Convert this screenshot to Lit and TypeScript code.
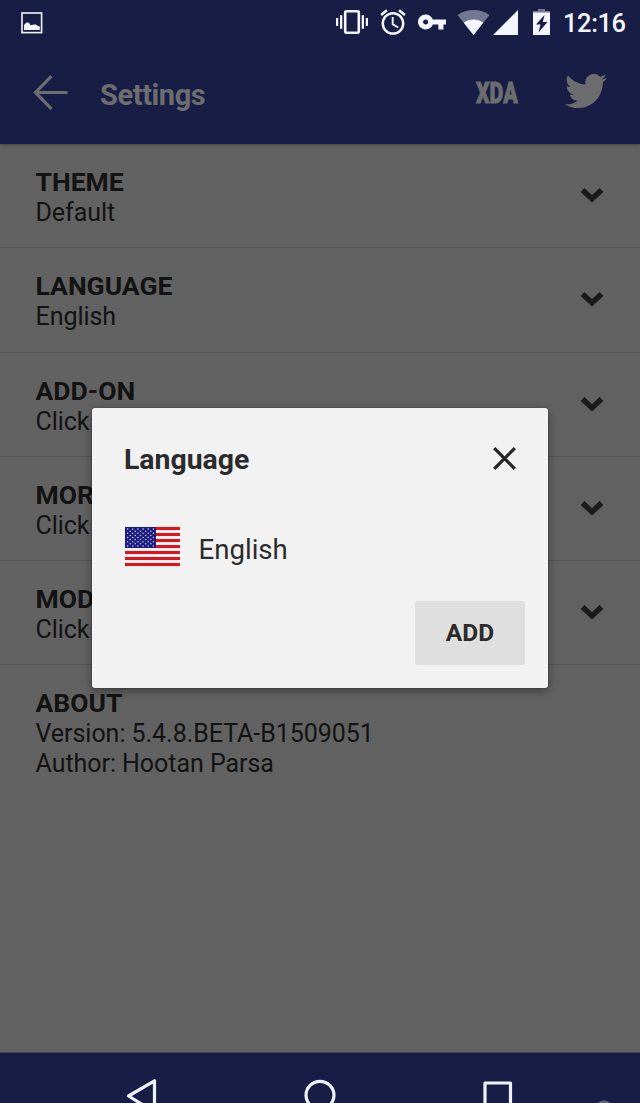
import { LitElement, html, css, svg } from "lit";
import { customElement, property } from "lit/decorators.js";

interface Setting {
  title: string;
  lines: string[];
  expandable: boolean;
}

const SETTINGS: Setting[] = [
  { title: "THEME", lines: ["Default"], expandable: true },
  { title: "LANGUAGE", lines: ["English"], expandable: true },
  { title: "ADD-ON", lines: ["Click"], expandable: true },
  { title: "MORE", lines: ["Click"], expandable: true },
  { title: "MODE", lines: ["Click"], expandable: true },
  { title: "ABOUT", lines: ["Version: 5.4.8.BETA-B1509051", "Author: Hootan Parsa"], expandable: false },
];

@customElement("status-bar")
class StatusBar extends LitElement {
  static styles = css`
    :host { display: flex; height: 46px; padding: 0 15px 0 21px; align-items: flex-start; color: #f4f6ff; box-sizing: border-box; }
    svg { display: block; flex: none; fill: currentColor; }
    .picture { margin: 12px auto 0 0; }
    .vibrate { margin: 10px 12px 0 0; }
    .alarm { margin: 9px 12px 0 0; }
    .key { margin: 14px 11px 0 0; }
    .wifi { margin: 10px 3px 0 0; }
    .signal { margin: 10px 15px 0 0; }
    .battery { margin: 9px 0 0 0; }
    .clock { width: 62px; margin-left: 13px; padding-top: 8px; font-size: 25.5px; line-height: 30px; font-weight: 500; letter-spacing: -0.4px; white-space: nowrap; }
  `;
  render() {
    return html`
      <svg class="picture" width="22" height="22" viewBox="0 0 22 22">
        <rect x="1" y="1" width="19.6" height="19.6" fill="none" stroke="currentColor" stroke-width="1.6" />
        <path d="M3 18V13L5.5 10.6L8 10.8L9.5 13.3L13.3 12.4L14.8 12.4L16.5 13.8L18.8 14.6V18Z" />
      </svg>
      <svg class="vibrate" width="32" height="24" viewBox="0 0 32 24">
        <rect x="9.2" y="1.2" width="13.6" height="21.6" rx="1.2" fill="none" stroke="currentColor" stroke-width="2.6" />
        <path d="M0 8h2.2v8H0zM4 5.3h2.3v13.4H4zM25.7 5.3H28v13.4h-2.3zM29.8 8H32v8h-2.2z" />
      </svg>
      <svg class="alarm" width="26" height="26" viewBox="1.8 1.7 20.4 20.4">
        <path d="M22 5.72l-4.6-3.86-1.29 1.53 4.6 3.86L22 5.72zM7.88 3.39L6.6 1.86 2 5.71l1.29 1.53 4.59-3.85zM12.5 8H11v6l4.75 2.85.75-1.23-4-2.37V8zM12 4c-4.97 0-9 4.03-9 9s4.02 9 9 9c4.97 0 9-4.03 9-9s-4.03-9-9-9zm0 16c-3.87 0-7-3.13-7-7s3.13-7 7-7 7 3.13 7 7-3.13 7-7 7z" />
      </svg>
      <svg class="key" width="28" height="16" viewBox="1 5.5 22 13" preserveAspectRatio="none">
        <path d="M12.65 10C11.83 7.67 9.61 6 7 6c-3.31 0-6 2.69-6 6s2.69 6 6 6c2.61 0 4.83-1.67 5.65-4H17v4h4v-4h2v-4H12.65zM7 14c-1.1 0-2-.9-2-2s.9-2 2-2 2 .9 2 2-.9 2-2 2z" />
      </svg>
      <svg class="wifi" width="33" height="25" viewBox="0 0 33 25">
        <path opacity=".42" d="M16.5 25L.5 5.1Q7.5 0 16.5 0T32.5 5.1Z" />
        <path d="M16.5 25L6.8 12.8Q11 9.6 16.5 9.6T26.2 12.8Z" />
      </svg>
      <svg class="signal" width="25" height="25" viewBox="0 0 25 25"><path d="M25 0V25H0Z" /></svg>
      <svg class="battery" width="17" height="26" viewBox="0 0 17 26">
        <path opacity=".42" d="M5 0h7v2h5v2H0V2h5z" />
        <path fill-rule="evenodd" d="M0 3.5H17V26H0ZM11.5 6L3 15.5H7.5L5.5 23.5L14.5 13H9.8Z" />
      </svg>
      <div class="clock">12:16</div>
    `;
  }
}

@customElement("app-header")
class AppHeader extends LitElement {
  static styles = css`
    :host { display: flex; height: 98px; padding: 0 33px; box-sizing: border-box; align-items: flex-start; color: #6d6d70; }
    svg { display: block; flex: none; }
    .back { margin: 29px 32px 0 0; fill: none; stroke: currentColor; stroke-width: 3.2; }
    .title { flex: 1; padding-top: 32px; font-size: 29px; line-height: 34px; font-weight: 700; letter-spacing: -0.4px; }
    .xda { width: 42px; margin: 32px 47px 0 0; font-size: 30px; line-height: 30px; font-weight: 900; }
    .xda span { display: inline-block; transform: scaleX(0.71); transform-origin: 0 0; -webkit-text-stroke: 0.9px currentColor; }
    .bird { margin-top: 24px; fill: currentColor; }
  `;
  render() {
    return html`
      <svg class="back" width="35" height="35" viewBox="0 0 35 35"><path d="M18.5 1.2L2.5 17.5L18.5 33.8M2.5 17.5H34.5" /></svg>
      <div class="title">Settings</div>
      <div class="xda"><span>XDA</span></div>
      <svg class="bird" width="42" height="42" viewBox="0 0 24 24">
        <path d="M23.953 4.57a10 10 0 01-2.825.775 4.958 4.958 0 002.163-2.723c-.951.555-2.005.959-3.127 1.184a4.92 4.92 0 00-8.384 4.482C7.69 8.095 4.067 6.13 1.64 3.162a4.822 4.822 0 00-.666 2.475c0 1.71.87 3.213 2.188 4.096a4.904 4.904 0 01-2.228-.616v.06a4.923 4.923 0 003.946 4.827 4.996 4.996 0 01-2.212.085 4.936 4.936 0 004.604 3.417 9.867 9.867 0 01-6.102 2.105c-.39 0-.779-.023-1.17-.067a13.995 13.995 0 007.557 2.209c9.053 0 13.998-7.496 13.998-13.985 0-.21 0-.42-.015-.63A9.935 9.935 0 0024 4.59z" />
      </svg>
    `;
  }
}

@customElement("setting-row")
class SettingRow extends LitElement {
  @property({ attribute: false }) item!: Setting;
  static styles = css`
    :host { display: flex; height: 104.25px; box-sizing: border-box; padding: 23px 36px 0 35.5px; align-items: flex-start; color: #131313; border-bottom: 1px solid #565656; }
    :host(.last) { border-bottom-color: transparent; height: auto; }
    .text { flex: 1; }
    .title { font-size: 26.5px; line-height: 30px; font-weight: 700; margin-bottom: 1px; }
    .line { font-size: 25px; line-height: 29.5px; letter-spacing: -0.04px; }
    .chevron { display: block; margin-top: 20px; fill: none; stroke: #1b1b1b; stroke-width: 5.6; }
  `;
  render() {
    return html`
      <div class="text">
        <div class="title">${this.item.title}</div>
        ${this.item.lines.map((l) => html`<div class="line">${l}</div>`)}
      </div>
      ${this.item.expandable
        ? html`<svg class="chevron" width="24" height="17" viewBox="0 0 24 17"><path d="M2.5 3L12 11.8L21.5 3" /></svg>`
        : null}
    `;
  }
}

@customElement("language-dialog")
class LanguageDialog extends LitElement {
  static styles = css`
    :host { display: flex; flex-direction: column; box-sizing: border-box; width: 456px; height: 280px; background: #f2f2f2; border-radius: 3px; box-shadow: 0 3px 10px rgba(0, 0, 0, 0.4), 0 0 2px rgba(0, 0, 0, 0.3); color: #2b2b2b; }
    .head { display: flex; justify-content: space-between; padding: 35px 32px 0; }
    .title { font-size: 28.4px; line-height: 34px; font-weight: 700; }
    .close { display: block; margin-top: 4px; fill: none; stroke: #262626; stroke-width: 3.2; }
    .option { display: flex; align-items: center; gap: 18.5px; padding: 0 33px; margin-top: 50px; height: 39px; font-size: 27.6px; line-height: 34px; }
    .name { padding-top: 6px; }
    .flag { display: block; flex: none; }
    .add { align-self: flex-end; margin: 35px 23px 0 0; border: 0; padding: 0; width: 110px; height: 64px; background: #dfdfdf; border-radius: 2px; color: #2b2b2b; font: 700 24.5px/64px Roboto, sans-serif; text-align: center; }
  `;
  render() {
    const stripes = [0, 1, 2, 3, 4, 5, 6];
    const rows = [0, 1, 2, 3, 4, 5, 6, 7, 8];
    return html`
      <div class="head">
        <div class="title">Language</div>
        <svg class="close" width="23" height="23" viewBox="0 0 23 23"><path d="M1.2 1.2L21.8 21.8M21.8 1.2L1.2 21.8" /></svg>
      </div>
      <div class="option">
        <svg class="flag" width="55" height="39" viewBox="0 0 55 39">
          <rect width="55" height="39" fill="#f8f5f5" />
          ${stripes.map((i) => svg`<rect y=${i * 6} width="55" height="3" fill="#e80f1b" />`)}
          <rect width="31" height="21" fill="#1c1c80" />
          ${rows.map((r) =>
            [0, 1, 2, 3, 4, 5].slice(0, r % 2 ? 5 : 6).map(
              (c) => svg`<circle cx=${2.6 + c * 5.15 + (r % 2 ? 2.58 : 0)} cy=${2.1 + r * 2.1} r="0.75" fill="#d4d4ee" />`
            )
          )}
        </svg>
        <div class="name">English</div>
      </div>
      <button class="add">ADD</button>
    `;
  }
}

@customElement("navigation-bar")
class NavigationBar extends LitElement {
  static styles = css`
    :host { display: block; height: 51px; background: #181d45; border-top: 1px solid #3e4360; box-sizing: border-box; overflow: hidden; }
    .keys { display: flex; padding: 25px 27px 0 125px; align-items: flex-start; }
    svg { display: block; flex: none; fill: none; stroke: #eef1ff; stroke-width: 3.2; stroke-linejoin: round; }
    .home { margin-left: 145px; }
    .recent { margin-left: 147px; }
    .corner { margin: 22px 0 0 auto; stroke: none; fill: #62657f; }
  `;
  render() {
    return html`
      <div class="keys">
        <svg width="33" height="38" viewBox="0 0 33 38"><path d="M29.5 2.8V34L3.5 18Z" /></svg>
        <svg class="home" width="33" height="38" viewBox="0 0 33 38"><circle cx="17" cy="17.3" r="14" /></svg>
        <svg class="recent" width="30" height="38" viewBox="0 0 30 38"><rect x="2" y="5" width="25.5" height="25.5" /></svg>
        <svg class="corner" width="18" height="18" viewBox="0 0 18 18"><circle cx="9" cy="9" r="8.5" /></svg>
      </div>
    `;
  }
}

@customElement("app-root")
class AppRoot extends LitElement {
  static styles = css`
    :host { display: flex; flex-direction: column; position: relative; width: 640px; height: 1103px; overflow: hidden; background: #626262; font-family: Roboto, sans-serif; }
    .top { flex: none; background: #181d45; box-shadow: 0 1px 3px rgba(0, 0, 0, 0.3); }
    .list { flex: 1; min-height: 0; }
    .popup { position: absolute; left: 92px; top: 408px; }
    navigation-bar { flex: none; }
  `;
  render() {
    return html`
      <div class="top">
        <status-bar></status-bar>
        <app-header></app-header>
      </div>
      <div class="list">
        ${SETTINGS.map((s) => html`<setting-row class=${s.expandable ? "" : "last"} .item=${s}></setting-row>`)}
      </div>
      <navigation-bar></navigation-bar>
      <language-dialog class="popup"></language-dialog>
    `;
  }
}
